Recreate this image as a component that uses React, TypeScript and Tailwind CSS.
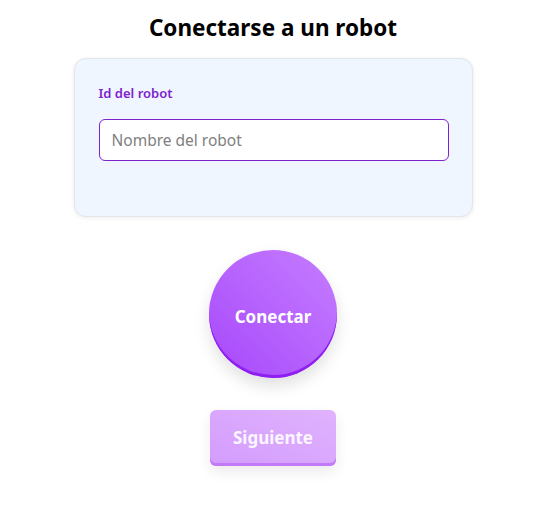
import { useState } from 'react';

export default function App() {
  const [robotId, setRobotId] = useState('');

  return (
    <div
      className="min-h-[516px] w-full bg-white flex flex-col items-center pt-3 pr-3"
      style={{ fontFamily: '"Noto Sans", "Open Sans", sans-serif' }}
    >
      <h1 className="text-[22.5px] leading-8 font-bold text-black">Conectarse a un robot</h1>

      {/* Card */}
      <div className="mt-[14px] w-[399px] h-[159px] rounded-xl bg-[#eff6ff] border border-[#e2e5ea] shadow-[0_1px_4px_rgba(0,0,0,0.08)] px-6 pt-[24px]">
        <label className="block text-[13px] leading-5 font-semibold text-[#7e22ce] mb-[16px]">
          Id del robot
        </label>
        <input
          type="text"
          value={robotId}
          onChange={(e) => setRobotId(e.target.value)}
          placeholder="Nombre del robot"
          className="w-[350px] h-[42px] bg-white border border-[#7e22ce] rounded-md px-3 text-[15.5px] text-gray-800 placeholder:text-[#808080] focus:outline-none"
        />
      </div>

      {/* Connect */}
      <button className="mt-[33px] w-[128px] h-[128px] pt-[5px] rounded-full bg-gradient-to-tr from-[#a745fb] to-[#c67cff] shadow-[inset_0_-3px_0_#8f1ff0,0_8px_16px_rgba(0,0,0,0.12)] text-white text-[17px] font-bold">
        Conectar
      </button>

      {/* Next */}
      <button
        disabled
        className="mt-[32px] w-[126px] h-[56px] rounded-md bg-gradient-to-tr from-[#d39cfd] to-[#e0b2fe] shadow-[inset_0_-3px_0_#c27af8,0_6px_14px_rgba(0,0,0,0.08)] text-white/90 text-[17px] font-bold"
      >
        Siguiente
      </button>
    </div>
  );
}
